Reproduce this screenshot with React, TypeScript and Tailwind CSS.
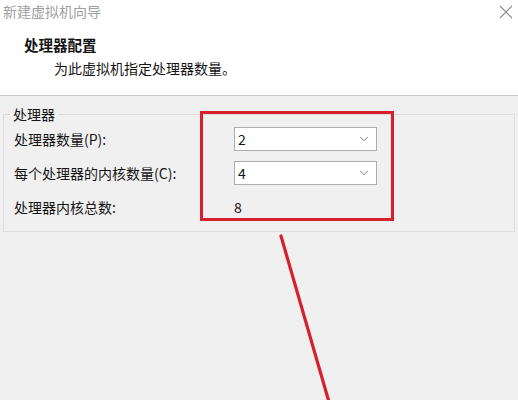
import { ChevronDown } from 'lucide-react';

const font = { fontFamily: '"Microsoft YaHei", "Noto Sans CJK SC", sans-serif' };

const rows = [
    { label: '处理器数量(P):', value: '2', select: true },
    { label: '每个处理器的内核数量(C):', value: '4', select: true },
    { label: '处理器内核总数:', value: '8', select: false },
];

export default function App() {
    return (
        <div className="relative w-[518px] h-[400px] overflow-hidden bg-[#f0f0f0] text-[#141414]" style={font}>
            {/* header */}
            <div className="h-[96px] bg-white border-b border-[#c8c8c8] flex flex-col">
                <div className="flex items-center justify-between h-[23px] pl-[3px] pr-[6px]">
                    <span className="text-[14px] text-[#a0a0a0]">新建虚拟机向导</span>
                    <svg width="14" height="14" viewBox="0 0 14 14" className="mr-[-1px]">
                        <path d="M1 1 L13 13 M13 1 L1 13" stroke="#8a8a8a" strokeWidth="1.1" />
                    </svg>
                </div>
                <div className="pl-[24px] pt-[12px] text-[14.5px] font-bold leading-[20px]">处理器配置</div>
                <div className="pl-[54px] pt-[3px] text-[14px] leading-[20px]">为此虚拟机指定处理器数量。</div>
            </div>

            {/* group box */}
            <fieldset className="mx-[3px] mt-[9px] border border-[#dcdcdc] pl-[10px] pr-0 pb-[12px] pt-0">
                <legend className="text-[14px] leading-[18px] px-[3px] ml-[-4px]">处理器</legend>
                <div className="flex flex-col gap-[10px] pt-[4px]">
                    {rows.map(row => (
                        <div key={row.label} className="flex items-center h-[24px]">
                            <span className="w-[220px] text-[14px]">{row.label}</span>
                            {row.select ? (
                                <div className="w-[143px] h-[24px] bg-white border border-[#adadad] flex items-center justify-between pl-[3px] pr-[5px]">
                                    <span className="text-[14px]">{row.value}</span>
                                    <ChevronDown size={14} strokeWidth={1.3} className="text-[#555]" />
                                </div>
                            ) : (
                                <span className="text-[14px] pt-[1px]">{row.value}</span>
                            )}
                        </div>
                    ))}
                </div>
            </fieldset>

            {/* annotation overlay */}
            <div className="absolute left-[200px] top-[111px] w-[194px] h-[110px] border-[3px] border-[#d8202c]" />
            <svg className="absolute left-0 top-0 pointer-events-none" width="518" height="400">
                <line x1="281" y1="236" x2="329" y2="402" stroke="#d8202c" strokeWidth="3.2" strokeLinecap="round" />
            </svg>
        </div>
    );
}
